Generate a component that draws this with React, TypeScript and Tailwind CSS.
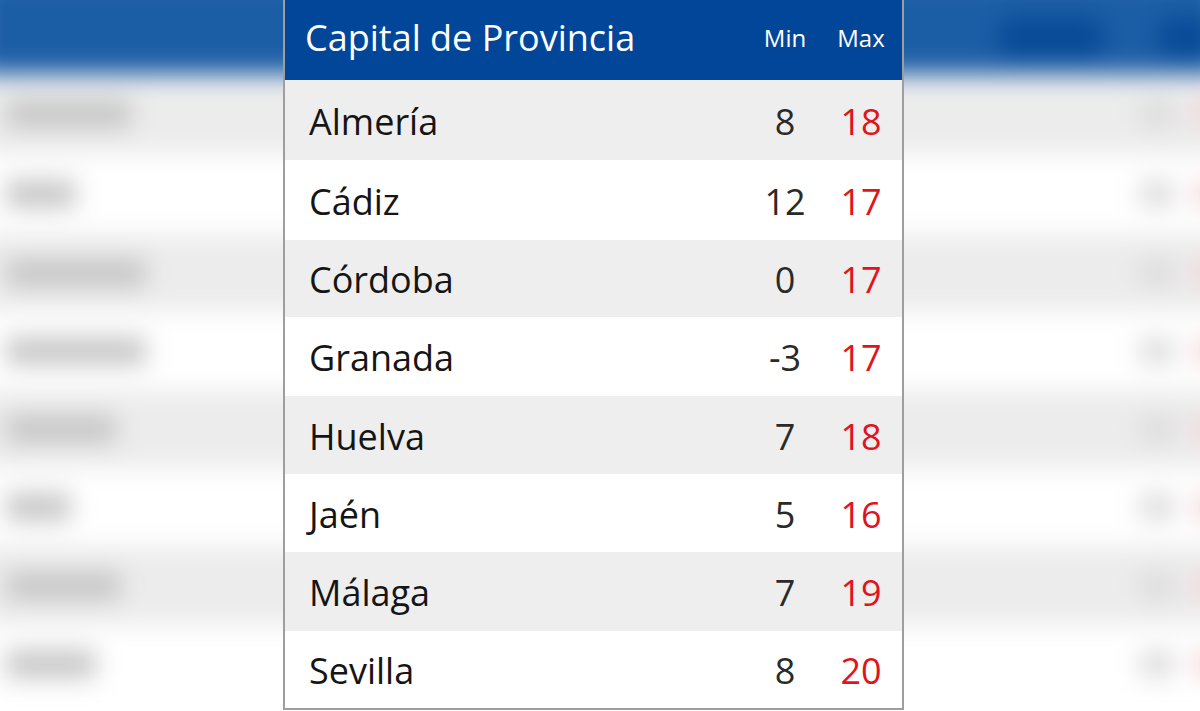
const rows = [
  { name: "Almería", min: "8", max: "18", h: "h-[80px]", shade: true },
  { name: "Cádiz", min: "12", max: "17", h: "h-[80px]", shade: false },
  { name: "Córdoba", min: "0", max: "17", h: "h-[77px]", shade: true },
  { name: "Granada", min: "-3", max: "17", h: "h-[79px]", shade: false },
  { name: "Huelva", min: "7", max: "18", h: "h-[78px]", shade: true },
  { name: "Jaén", min: "5", max: "16", h: "h-[78px]", shade: false },
  { name: "Málaga", min: "7", max: "19", h: "h-[79px]", shade: true },
  { name: "Sevilla", min: "8", max: "20", h: "h-[77px]", shade: false },
];

// widths of the blurred name blobs on the left edge of the backdrop
const blobs = ["w-[125px]", "w-[70px]", "w-[140px]", "w-[140px]", "w-[110px]", "w-[65px]", "w-[115px]", "w-[90px]"];

function Backdrop() {
  return (
    <div className="absolute -inset-6 blur-[12px]">
      <div className="flex h-[98px] items-center bg-[#1c5ea6] pt-6">
        <div className="ml-[1020px] h-[40px] w-[110px] rounded-full bg-[#084a97]" />
        <div className="ml-[50px] h-[40px] w-[60px] rounded-full bg-[#084a97]" />
      </div>
      {rows.map((row, i) => (
        <div
          key={row.name}
          className={`flex ${row.h} items-center ${row.shade ? "bg-[#ececec]" : "bg-white"}`}
        >
          <div className={`ml-[30px] h-[28px] ${blobs[i]} rounded bg-[#c6c6c6]`} />
          <div className="ml-auto h-[26px] w-[34px] rounded bg-[#dcdcdc]" />
          <div className="ml-[22px] h-[26px] w-[28px] rounded bg-[#f5d2d2]" />
        </div>
      ))}
    </div>
  );
}

export default function App() {
  return (
    <div className="relative h-[711px] w-[1200px] overflow-hidden bg-white font-['Open_Sans',sans-serif]">
      <Backdrop />
      <div className="relative ml-[283px] w-[621px] border-x-2 border-b-2 border-[#9e9e9e] bg-white">
        <div className="flex h-[80px] items-center bg-[#02469a] pr-[3px] pb-1 text-white">
          <div className="flex-1 pl-[20px] text-[36px] leading-none">Capital de Provincia</div>
          <div className="w-[60px] text-center text-[24px]">Min</div>
          <div className="ml-[8px] w-[76px] text-center text-[24px]">Max</div>
        </div>
        {rows.map((row) => (
          <div
            key={row.name}
            className={`flex ${row.h} items-center ${row.shade ? "bg-[#eeeeee]" : "bg-white"} pt-[3px] pr-[3px] text-[36px] leading-none`}
          >
            <div className="flex-1 pl-[24px] text-[#151515]">{row.name}</div>
            <div className="w-[60px] text-center text-[#2a2a2a]">{row.min}</div>
            <div className="ml-[8px] w-[76px] text-center text-[#e0141c]">{row.max}</div>
          </div>
        ))}
      </div>
    </div>
  );
}
